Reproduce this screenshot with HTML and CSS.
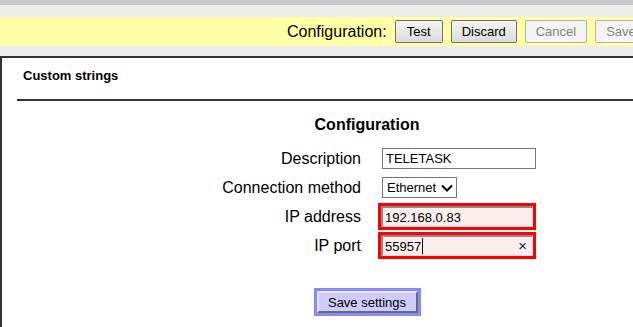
FILE: index.html
```html
<!DOCTYPE html>
<html lang="en">
<head>
  <meta charset="UTF-8" />
  <title>Custom strings</title>
  <link rel="stylesheet" href="styles.css">
</head>
<body>
  <div class="page">
    <div class="top-strip"></div>

    <div class="toolbar">
      <span class="toolbar-label">Configuration:</span>
      <button class="tb-btn tb-test">Test</button>
      <button class="tb-btn">Discard</button>
      <button class="tb-btn" disabled>Cancel</button>
      <button class="tb-btn" disabled>Save</button>
    </div>

    <div class="panel">
      <div class="panel-head">Custom strings</div>
      <div class="rule"></div>

      <h3 class="form-title">Configuration</h3>

      <div class="form">
        <label class="lbl">Description</label>
        <div class="cell">
          <input class="txt" type="text" value="TELETASK" />
        </div>

        <label class="lbl">Connection method</label>
        <div class="cell">
          <div class="select-wrap">
            <select class="sel">
              <option>Ethernet</option>
            </select>
            <svg class="chev" width="12" height="8" viewBox="0 0 12 8">
              <path d="M1 1.5 L6 6.5 L11 1.5" fill="none" stroke="#000" stroke-width="2" />
            </svg>
          </div>
        </div>

        <label class="lbl">IP address</label>
        <div class="cell">
          <input class="txt txt-error" type="text" value="192.168.0.83" />
        </div>

        <label class="lbl">IP port</label>
        <div class="cell">
          <div class="field-wrap">
            <input class="txt txt-error" type="text" value="55957" />
            <span class="caret"></span>
            <span class="clear">×</span>
          </div>
        </div>
      </div>

      <div class="actions">
        <button class="save-btn">Save settings</button>
      </div>
    </div>
  </div>
</body>
</html>
```

FILE: styles.css
```css
body {
  margin: 0;
  background: #ececec;
  font-family: "Liberation Sans", Arial, sans-serif;
  color: #000;
  overflow: hidden;
}

.page {
  width: 760px;
}

/* franja superior */
.top-strip {
  height: 5px;
  background: #c8c8c8;
  margin-bottom: 12px;
}

/* barra amarilla */
.toolbar {
  height: 29px;
  background: #ffffa5;
  display: flex;
  align-items: center;
  padding-left: 287px;
  gap: 8px;
}

.toolbar-label {
  font-size: 16px;
}

.tb-btn {
  font-family: inherit;
  font-size: 13px;
  height: 23px;
  padding: 0 10px;
  border: 1px solid #707070;
  border-radius: 2px;
  background: linear-gradient(#f3f3f3, #dcdcdc);
  color: #000;
}

.tb-test {
  min-width: 48px;
}

.tb-btn:disabled {
  border-color: #adb2b5;
  background: #f4f4f4;
  color: #838383;
}

/* panel principal */
.panel {
  margin-top: 10px;
  width: 730px;
  height: 300px;
  background: #fff;
  border-top: 2px solid #333;
  border-left: 2px solid #333;
}

.panel-head {
  padding: 10px 0 0 21px;
  font-size: 13px;
  font-weight: bold;
  line-height: 15px;
}

.rule {
  margin: 16px 0 0 15px;
  height: 2px;
  background: #333;
}

.form-title {
  margin: 15px 0 0;
  font-size: 16px;
  line-height: 18px;
  text-align: center;
}

.form {
  margin-top: 10px;
  display: grid;
  grid-template-columns: 168px 160px;
  grid-auto-rows: 29px;
  column-gap: 20px;
  justify-content: center;
  align-items: center;
}

.lbl {
  font-size: 16px;
  line-height: 18px;
  text-align: right;
}

.cell {
  display: flex;
  align-items: center;
}

.txt {
  box-sizing: border-box;
  width: 154px;
  height: 21px;
  margin: 0 0 0 1px;
  padding: 0 3px;
  border: 1px solid #767676;
  font-family: inherit;
  font-size: 13px;
  color: #000;
  background: #fff;
}

.txt-error {
  width: 152px;
  margin-left: 0;
  border-style: solid;
  border-width: 2px 1px 1px 2px;
  border-color: #8a8a8a #dedede #dedede #8a8a8a;
  background: #fdeeee;
  padding: 0 2px;
  box-shadow: 0 0 0 3px #f00;
}

.select-wrap {
  position: relative;
  margin-left: 1px;
}

.sel {
  appearance: none;
  box-sizing: border-box;
  width: 75px;
  height: 21px;
  padding: 0 0 0 4px;
  border: 1px solid #767676;
  border-radius: 0;
  background: #fff;
  font-family: inherit;
  font-size: 13px;
  color: #000;
}

.chev {
  position: absolute;
  right: 4px;
  top: 7px;
}

.field-wrap {
  position: relative;
}

.caret {
  position: absolute;
  left: 41px;
  top: 3px;
  width: 1px;
  height: 16px;
  background: #000;
}

.clear {
  position: absolute;
  right: 6px;
  top: 2px;
  font-size: 15px;
  line-height: 17px;
  color: #1a1a3a;
}

.actions {
  margin-top: 31px;
  display: flex;
  justify-content: center;
}

.save-btn {
  box-sizing: border-box;
  width: 101px;
  height: 22px;
  padding: 0;
  font-family: inherit;
  font-size: 13px;
  color: #000;
  background: #ccccff;
  border: 2px solid;
  border-color: #e8e8e8 #6a6a6a #6a6a6a #e8e8e8;
  outline: 3px solid #8888ff;
}
```
